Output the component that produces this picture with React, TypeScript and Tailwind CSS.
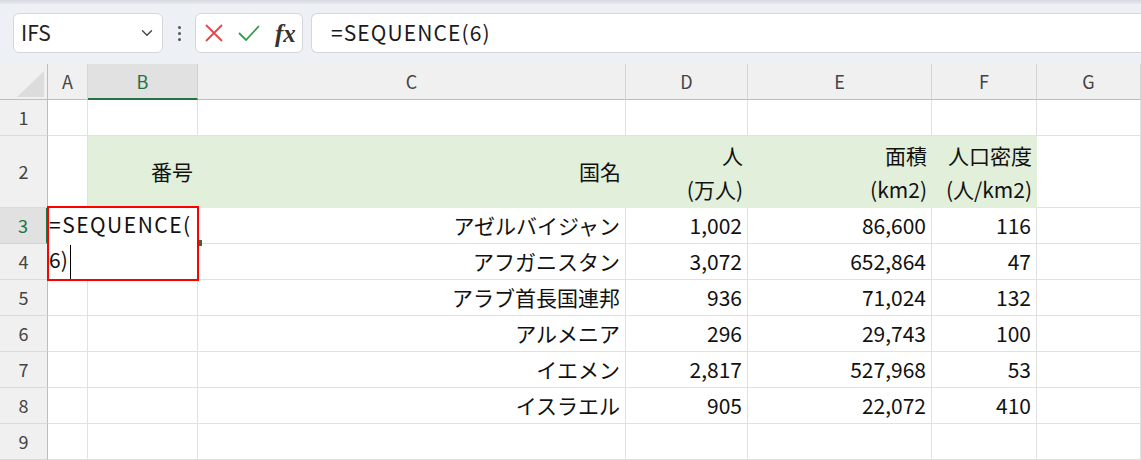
import React from "react";
import { ChevronDown } from "lucide-react";

const FONT = { fontFamily: '"Noto Sans CJK JP", "Noto Sans", sans-serif' };

const cols = ["A", "B", "C", "D", "E", "F", "G"];

type Row = [string, string, string, string];
const data: Row[] = [
  ["アゼルバイジャン", "1,002", "86,600", "116"],
  ["アフガニスタン", "3,072", "652,864", "47"],
  ["アラブ首長国連邦", "936", "71,024", "132"],
  ["アルメニア", "296", "29,743", "100"],
  ["イエメン", "2,817", "527,968", "53"],
  ["イスラエル", "905", "22,072", "410"],
];

const cell = "border-r border-b border-[#e1e1e1] bg-white";
const num = "flex items-center justify-end pr-[5px] text-[21px] text-[#111]";

function RowHead({ n, active }: { n: number; active?: boolean }) {
  return (
    <div
      className={
        active
          ? "flex items-center justify-center bg-[#e1e1e1] border-b border-[#d5d5d5] border-r-2 border-r-[#217346] text-[18px] text-[#217346]"
          : "flex items-center justify-center bg-[#f0f0f0] border-b border-[#dadada] border-r border-r-[#bdbdbd] text-[18px] text-[#444]"
      }
    >
      {n}
    </div>
  );
}

export default function App() {
  return (
    <div className="w-[1141px] h-[460px] overflow-hidden bg-white" style={FONT}>
      {/* Formula bar */}
      <div className="relative h-[64px] bg-[#edf0f4]">
        <div className="absolute left-0 top-0 w-full h-[4px] bg-gradient-to-b from-[#d6dae0] to-[#e6e9ee]" />
        <div className="flex items-start pt-[13px] pl-[13px]">
          <div className="w-[150px] h-[40px] bg-white border border-[#d3d7dc] rounded-[6px] flex items-center justify-between pl-[7px] pr-[6px]">
            <span className="text-[21px] text-[#222]">IFS</span>
            <ChevronDown size={18} strokeWidth={1.8} color="#444" />
          </div>
          <div className="w-[32px] h-[40px] flex flex-col items-center justify-center gap-[3px]">
            <span className="w-[3px] h-[3px] rounded-full bg-[#555]" />
            <span className="w-[3px] h-[3px] rounded-full bg-[#555]" />
            <span className="w-[3px] h-[3px] rounded-full bg-[#555]" />
          </div>
          <div className="w-[108px] h-[40px] bg-white border border-[#d3d7dc] rounded-[6px] flex items-center pl-[9px]">
            <svg width="18" height="18" viewBox="0 0 18 18">
              <path d="M1 1 L17 17 M17 1 L1 17" stroke="#e64646" strokeWidth="1.8" fill="none" />
            </svg>
            <svg width="22" height="16" viewBox="0 0 22 16" className="ml-[15px]">
              <path d="M1 8 L8 15 L21 1" stroke="#2f9e4f" strokeWidth="1.8" fill="none" />
            </svg>
            <span
              className="ml-[15px] text-[25px] italic font-semibold text-[#333] leading-none"
              style={{ fontFamily: '"Liberation Serif", "DejaVu Serif", serif' }}
            >
              fx
            </span>
          </div>
          <div className="ml-[8px] flex-1 h-[40px] bg-white border border-[#d3d7dc] rounded-l-[6px] border-r-0 flex items-center pl-[19px]">
            <span className="text-[21px] text-[#1a1a1a] tracking-[1.1px]">=SEQUENCE(6)</span>
          </div>
        </div>
      </div>

      {/* Grid */}
      <div className="relative">
        <div
          className="grid"
          style={{
            gridTemplateColumns: "48px 40px 110px 428px 122px 184px 105px 104px",
            gridTemplateRows: "36px 36px 72px repeat(7, 36px)",
          }}
        >
          {/* header row */}
          <div className="bg-[#f0f0f0] border-r border-r-[#bdbdbd] border-b border-b-[#bdbdbd] relative">
            <svg className="absolute left-[17px] top-[7px]" width="27" height="26" viewBox="0 0 27 26">
              <path d="M27 0 L27 26 L0 26 Z" fill="#dcdcdc" />
            </svg>
          </div>
          {cols.map((c) =>
            c === "B" ? (
              <div
                key={c}
                className="flex items-center justify-center bg-[#e1e1e1] border-r border-[#d0d0d0] border-b-2 border-b-[#217346] text-[18px] text-[#217346]"
              >
                {c}
              </div>
            ) : (
              <div
                key={c}
                className="flex items-center justify-center bg-[#f0f0f0] border-r border-[#d5d5d5] border-b border-b-[#bdbdbd] text-[18px] text-[#444]"
              >
                {c}
              </div>
            )
          )}

          {/* row 1 */}
          <RowHead n={1} />
          {cols.map((c) => (
            <div key={c} className={cell} />
          ))}

          {/* row 2 */}
          <RowHead n={2} />
          <div className={cell} />
          <div className="bg-[#e2efda] flex items-center justify-end pr-[5px] text-[21px] text-[#111]">番号</div>
          <div className="bg-[#e2efda] flex items-center justify-end pr-[5px] text-[21px] text-[#111]">国名</div>
          <div className="bg-[#e2efda] flex flex-col justify-center items-end pr-[5px] text-[21px] leading-[34px] text-[#111]">
            <span>人</span>
            <span>(万人)</span>
          </div>
          <div className="bg-[#e2efda] flex flex-col justify-center items-end pr-[5px] text-[21px] leading-[34px] text-[#111]">
            <span>面積</span>
            <span>(km2)</span>
          </div>
          <div className="bg-[#e2efda] flex flex-col justify-center items-end pr-[5px] text-[21px] leading-[34px] text-[#111]">
            <span>人口密度</span>
            <span>(人/km2)</span>
          </div>
          <div className={cell} />

          {/* data rows */}
          {data.map((r, i) => (
            <React.Fragment key={i}>
              <RowHead n={i + 3} active={i === 0} />
              <div className={cell} />
              <div className={cell} />
              <div className={`${cell} ${num}`}>{r[0]}</div>
              <div className={`${cell} ${num}`}>{r[1]}</div>
              <div className={`${cell} ${num}`}>{r[2]}</div>
              <div className={`${cell} ${num}`}>{r[3]}</div>
              <div className={cell} />
            </React.Fragment>
          ))}

          {/* row 9 */}
          <RowHead n={9} />
          {cols.map((c) => (
            <div key={c} className={cell} />
          ))}
        </div>

        {/* fill handle */}
        <div className="absolute left-[197px] top-[176px] w-[5px] h-[6px] bg-[#217346]" />

        {/* in-cell editor */}
        <div className="absolute left-[47px] top-[142px] w-[152px] h-[75px] border-2 border-[#ff0000] bg-white">
          <div className="text-[21px] leading-[35px] text-[#111] -mt-[1px] whitespace-nowrap">
            <span className="tracking-[1.5px]">=SEQUENCE(</span>
            <br />
            <span>6)</span>
            <span className="inline-block w-[1px] h-[34px] bg-black align-middle ml-[2px]" />
          </div>
        </div>
      </div>
    </div>
  );
}
